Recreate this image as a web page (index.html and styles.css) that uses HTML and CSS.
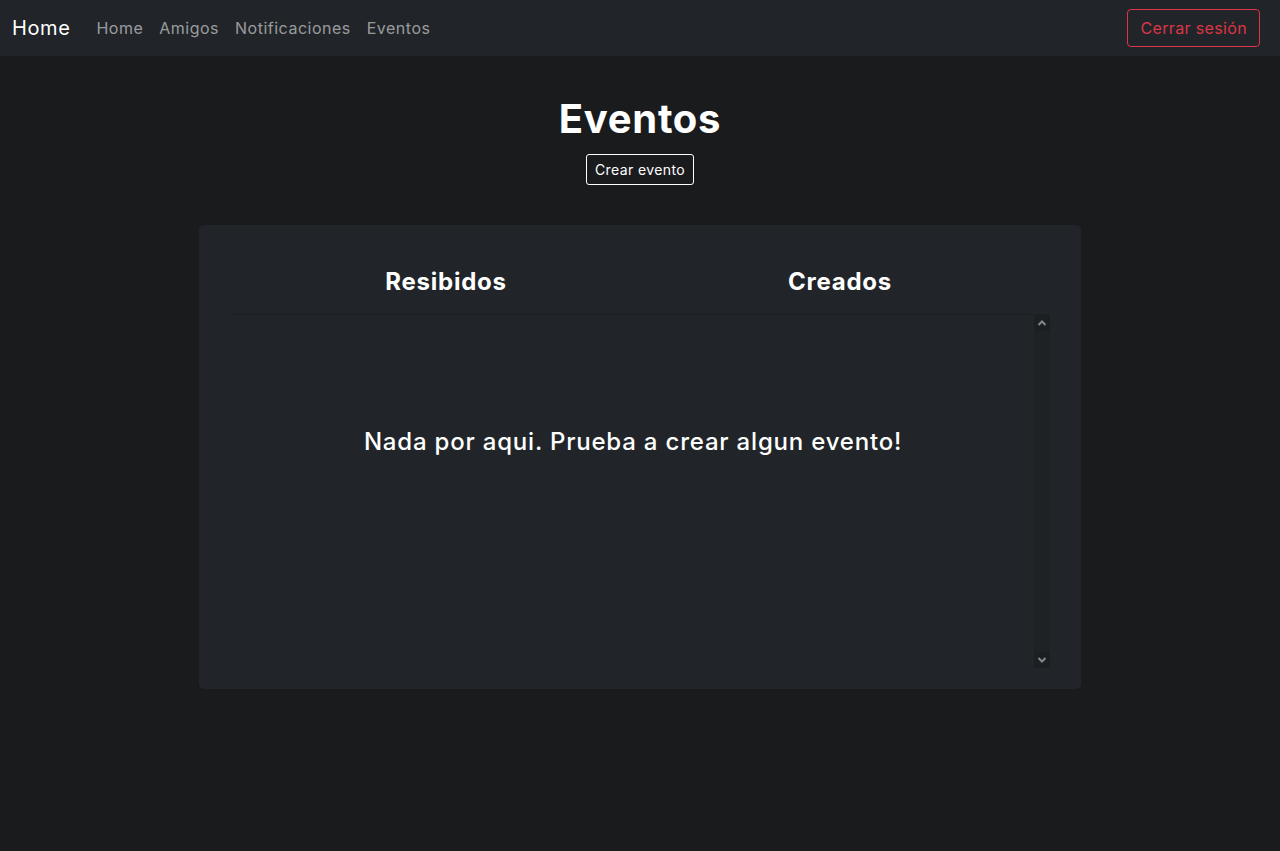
FILE: index.html
```html
<!DOCTYPE html>
<html lang="es">
<head>
<meta charset="utf-8">
<title>Eventos</title>
<link rel="stylesheet" href="styles.css">
</head>
<body>
<nav class="navbar">
  <div class="nav-left">
    <a class="brand" href="#">Home</a>
    <ul class="nav-links">
      <li><a href="#">Home</a></li>
      <li><a href="#">Amigos</a></li>
      <li><a href="#">Notificaciones</a></li>
      <li><a href="#">Eventos</a></li>
    </ul>
  </div>
  <button class="btn-logout">Cerrar sesión</button>
</nav>
<main class="main">
  <h1 class="title">Eventos</h1>
  <button class="btn-create">Crear evento</button>
  <section class="card">
    <div class="tabs">
      <h3 class="tab">Resibidos</h3>
      <h3 class="tab">Creados</h3>
    </div>
    <div class="list">
      <div class="list-content">
        <p class="empty">Nada por aqui. Prueba a crear algun evento!</p>
      </div>
      <div class="scrollbar" aria-hidden="true">
        <div class="sb-btn">
          <svg width="16" height="16" viewBox="0 0 16 16"><polyline points="4.5,10 8,6.5 11.5,10" fill="none" stroke="#85888c" stroke-width="2"/></svg>
        </div>
        <div class="sb-track"></div>
        <div class="sb-btn">
          <svg width="16" height="16" viewBox="0 0 16 16"><polyline points="4.5,6 8,9.5 11.5,6" fill="none" stroke="#85888c" stroke-width="2"/></svg>
        </div>
      </div>
    </div>
  </section>
</main>
</body>
</html>
```
FILE: styles.css
```css
* { box-sizing: border-box; }
html, body { margin: 0; padding: 0; }
body {
  background: #1a1b1d;
  color: #fff;
  font-family: Inter, "Noto Sans", sans-serif;
  height: 851px;
}
a { text-decoration: none; }
.navbar {
  height: 56px;
  background: #212529;
  display: flex;
  align-items: center;
  justify-content: space-between;
  padding: 0 20px 0 12px;
}
.nav-left { display: flex; align-items: center; }
.brand {
  color: #fff;
  font-size: 20px;
  letter-spacing: 0.6px;
  margin-right: 18px;
}
.nav-links {
  list-style: none;
  margin: 0;
  padding: 0;
  display: flex;
}
.nav-links a {
  display: block;
  color: rgba(255,255,255,0.55);
  font-size: 16px;
  letter-spacing: 0.5px;
  padding: 8px 8px;
}
.btn-logout {
  font-family: inherit;
  font-size: 16px;
  letter-spacing: 0.35px;
  color: #dc3545;
  background: transparent;
  border: 1px solid #dc3545;
  border-radius: 4px;
  height: 38px;
  padding: 0 12px;
}
.main {
  display: flex;
  flex-direction: column;
  align-items: center;
  padding-top: 39px;
}
.title {
  margin: 0 0 11px;
  font-size: 40px;
  font-weight: 700;
  line-height: 48px;
  letter-spacing: 0.7px;
}
.btn-create {
  font-family: inherit;
  font-size: 14px;
  letter-spacing: 0.4px;
  color: #fff;
  background: transparent;
  border: 1px solid #fff;
  border-radius: 3px;
  height: 31px;
  padding: 0 8px;
}
.card {
  margin-top: 40px;
  width: 882px;
  background: #212529;
  border-radius: 5px;
  padding: 42px 31px 21px 33px;
}
.tabs {
  display: grid;
  grid-template-columns: 394px 394px;
  padding-left: 17px;
  margin-bottom: 18px;
}
.tab {
  margin: 0;
  text-align: center;
  font-size: 24px;
  font-weight: 700;
  line-height: 29px;
  letter-spacing: 0.75px;
}
.list {
  border-top: 1px solid #1d1f22;
  height: 354px;
  display: flex;
}
.list-content {
  flex: 1;
  display: flex;
  justify-content: center;
  padding-top: 109px;
}
.empty {
  margin: 0;
  font-size: 24px;
  line-height: 36px;
  font-weight: 500;
  letter-spacing: 0.8px;
  height: 36px;
}
.scrollbar {
  width: 16px;
  display: flex;
  flex-direction: column;
  background: #1f2225;
}
.sb-btn {
  height: 16px;
  background: #1c1f22;
  display: flex;
}
.sb-track { flex: 1; }
```
